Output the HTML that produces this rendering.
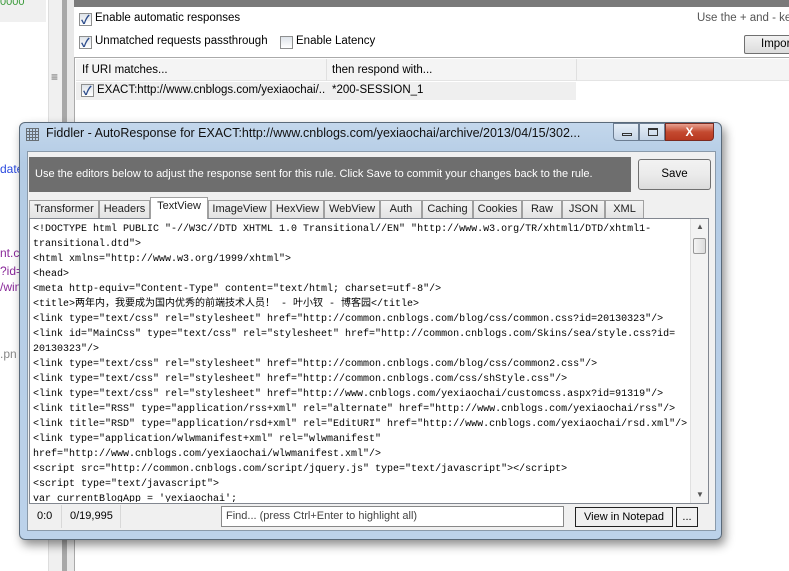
<!DOCTYPE html>
<html><head><meta charset="utf-8"><style>
*{margin:0;padding:0;box-sizing:border-box}
body{width:789px;height:571px;background:#fff;position:relative;overflow:hidden;font-family:"Liberation Sans","Noto Sans CJK SC",sans-serif;font-size:11.5px;color:#000}
.a{position:absolute;white-space:nowrap}
.cb{position:absolute;width:13px;height:13px;border:1px solid #8e8f8f;background:linear-gradient(#dfe4ea,#fff)}
.cb.on::after{content:"✓";position:absolute;left:1px;top:-3px;font-size:12px;color:#2a4a8a;font-weight:bold}
.mono{font-family:"Liberation Mono","Noto Sans CJK SC",monospace;font-size:10px;white-space:pre;line-height:15px}
.tab{position:absolute;top:200px;height:18px;border:1px solid #a0a0a0;border-bottom:none;background:linear-gradient(#f4f4f4,#e3e3e3);font-size:11px;padding:2px 0;text-align:center;color:#222;white-space:nowrap;overflow:hidden}
</style></head><body>
<div class="a" style="left:0;top:0;width:46px;height:22px;background:#f0f0f0"></div>
<div class="a" style="left:0;top:-4px;color:#3a9a3a;font-size:11px">0000</div>
<div class="a" style="left:0;top:162px;color:#2a4adf;font-size:12px">date</div>
<div class="a" style="left:0;top:246px;color:#8a2a9a;font-size:12px">nt.c</div>
<div class="a" style="left:0;top:264px;color:#8a2a9a;font-size:12px">?id=</div>
<div class="a" style="left:0;top:280px;color:#8a2a9a;font-size:12px">/win</div>
<div class="a" style="left:0;top:347px;color:#888;font-size:12px">.pn</div>
<div class="a" style="left:48px;top:0;width:14px;height:571px;background:#f0f0f0;border-left:1px solid #ddd"></div>
<div class="a" style="left:51px;top:70px;color:#666;font-size:12px">≡</div>
<div class="a" style="left:62px;top:0;width:5px;height:571px;background:#a8a8a8"></div>
<div class="a" style="left:67px;top:0;width:7px;height:571px;background:#e8e8e8"></div>
<div class="a" style="left:74px;top:0;width:715px;height:7px;background:#7a7a7a"></div>
<div class="cb on" style="left:79px;top:13px"></div>
<div class="a" style="left:95px;top:12px">Enable automatic responses</div>
<div class="cb on" style="left:79px;top:36px"></div>
<div class="a" style="left:95px;top:35px">Unmatched requests passthrough</div>
<div class="cb" style="left:280px;top:36px"></div>
<div class="a" style="left:296px;top:35px">Enable Latency</div>
<div class="a" style="left:697px;top:12px;color:#555">Use the + and - ke</div>
<div class="a" style="left:744px;top:35px;width:60px;height:19px;border:1px solid #707070;border-radius:2px;background:linear-gradient(#f2f2f2,#dcdcdc);padding:2px 16px">Impor</div>
<div class="a" style="left:74px;top:57px;width:715px;height:1px;background:#aaa"></div>
<div class="a" style="left:74px;top:57px;width:1px;height:514px;background:#aaa"></div>
<div class="a" style="left:76px;top:59px;width:713px;height:22px;background:#f4f4f4;border-bottom:1px solid #e4e4e4"></div>
<div class="a" style="left:326px;top:59px;width:1px;height:22px;background:#e0e0e0"></div>
<div class="a" style="left:576px;top:59px;width:1px;height:22px;background:#e0e0e0"></div>
<div class="a" style="left:82px;top:64px">If URI matches...</div>
<div class="a" style="left:332px;top:64px">then respond with...</div>
<div class="a" style="left:76px;top:82px;width:500px;height:18px;background:#efefef"></div>
<div class="cb on" style="left:81px;top:84px"></div>
<div class="a" style="left:97px;top:84px;width:228px;overflow:hidden">EXACT:http://www.cnblogs.com/yexiaochai/...</div>
<div class="a" style="left:332px;top:84px">*200-SESSION_1</div>
<!-- dialog -->
<div class="a" style="left:19px;top:122px;width:703px;height:418px;border:1px solid #5a6a7a;border-radius:6px;background:linear-gradient(#c3d7ec,#b3cbe4 40px,#bcd2ea);box-shadow:3px 5px 10px rgba(0,0,0,.45)"></div>
<div class="a" style="left:26px;top:128px;width:13px;height:13px;background:repeating-linear-gradient(90deg,#444 0 1px,transparent 1px 3px),repeating-linear-gradient(#444 0 1px,transparent 1px 3px);opacity:.7"></div>
<div class="a" style="left:46px;top:126px;font-size:12.5px;color:#111">Fiddler - AutoResponse for EXACT:http://www.cnblogs.com/yexiaochai/archive/2013/04/15/302...</div>
<div class="a" style="left:613px;top:123px;width:26px;height:18px;border:1px solid #6c7d92;border-radius:0 0 0 4px;background:linear-gradient(#e6eef7,#c4d4e6)"><div class="a" style="left:8px;top:9px;width:10px;height:3px;border:1px solid #333"></div></div>
<div class="a" style="left:639px;top:123px;width:26px;height:18px;border:1px solid #6c7d92;background:linear-gradient(#e6eef7,#c4d4e6)"><div class="a" style="left:8px;top:4px;width:10px;height:8px;border:1px solid #333;border-top-width:2px"></div></div>
<div class="a" style="left:665px;top:123px;width:49px;height:18px;border:1px solid #7a2a20;border-radius:0 0 4px 0;background:linear-gradient(#e8a090,#c44a30 50%,#b83820);color:#fff;font-weight:bold;text-align:center;font-size:12px;line-height:16px">X</div>
<div class="a" style="left:27px;top:151px;width:689px;height:380px;background:#f0f0f0;border:1px solid #8a9aaa"></div>
<div class="a" style="left:29px;top:157px;width:602px;height:35px;background:#6e6e6e;color:#fff;padding:0 6px;line-height:35px;font-size:11px">Use the editors below to adjust the response sent for this rule. Click Save to commit your changes back to the rule.</div>
<div class="a" style="left:638px;top:159px;width:73px;height:31px;border:1px solid #707070;border-radius:3px;background:linear-gradient(#f2f2f2,#ebebeb 50%,#dcdcdc);text-align:center;line-height:29px">Save</div>
<div class="tab" style="left:29px;width:70px">Transformer</div>
<div class="tab" style="left:99px;width:51px">Headers</div>
<div class="tab" style="left:150px;width:58px;top:197px;height:22px;background:#fff;z-index:2">TextView</div>
<div class="tab" style="left:208px;width:63px">ImageView</div>
<div class="tab" style="left:271px;width:53px">HexView</div>
<div class="tab" style="left:324px;width:56px">WebView</div>
<div class="tab" style="left:380px;width:42px">Auth</div>
<div class="tab" style="left:422px;width:51px">Caching</div>
<div class="tab" style="left:473px;width:49px">Cookies</div>
<div class="tab" style="left:522px;width:40px">Raw</div>
<div class="tab" style="left:562px;width:43px">JSON</div>
<div class="tab" style="left:605px;width:39px">XML</div>
<div class="a" style="left:29px;top:218px;width:680px;height:286px;background:#fff;border:1px solid #828790"></div>
<div class="a" style="left:690px;top:219px;width:18px;height:284px;background:#f3f3f3;border-left:1px solid #e0e0e0"></div>
<div class="a" style="left:693px;top:238px;width:13px;height:16px;border:1px solid #999;border-radius:2px;background:linear-gradient(90deg,#f4f4f4,#dcdcdc)"></div>
<div class="a" style="left:696px;top:222px;font-size:8px;color:#555">▲</div>
<div class="a" style="left:696px;top:490px;font-size:8px;color:#555">▼</div>
<div class="a mono" style="left:33px;top:222px;width:656px;height:280px;overflow:hidden">&lt;!DOCTYPE html PUBLIC "-//W3C//DTD XHTML 1.0 Transitional//EN" "http://www.w3.org/TR/xhtml1/DTD/xhtml1-
transitional.dtd"&gt;
&lt;html xmlns="http://www.w3.org/1999/xhtml"&gt;
&lt;head&gt;
&lt;meta http-equiv="Content-Type" content="text/html; charset=utf-8"/&gt;
&lt;title&gt;两年内，我要成为国内优秀的前端技术人员！ - 叶小钗 - 博客园&lt;/title&gt;
&lt;link type="text/css" rel="stylesheet" href="http://common.cnblogs.com/blog/css/common.css?id=20130323"/&gt;
&lt;link id="MainCss" type="text/css" rel="stylesheet" href="http://common.cnblogs.com/Skins/sea/style.css?id=
20130323"/&gt;
&lt;link type="text/css" rel="stylesheet" href="http://common.cnblogs.com/blog/css/common2.css"/&gt;
&lt;link type="text/css" rel="stylesheet" href="http://common.cnblogs.com/css/shStyle.css"/&gt;
&lt;link type="text/css" rel="stylesheet" href="http://www.cnblogs.com/yexiaochai/customcss.aspx?id=91319"/&gt;
&lt;link title="RSS" type="application/rss+xml" rel="alternate" href="http://www.cnblogs.com/yexiaochai/rss"/&gt;
&lt;link title="RSD" type="application/rsd+xml" rel="EditURI" href="http://www.cnblogs.com/yexiaochai/rsd.xml"/&gt;
&lt;link type="application/wlwmanifest+xml" rel="wlwmanifest"
href="http://www.cnblogs.com/yexiaochai/wlwmanifest.xml"/&gt;
&lt;script src="http://common.cnblogs.com/script/jquery.js" type="text/javascript"&gt;&lt;/script&gt;
&lt;script type="text/javascript"&gt;
var currentBlogApp = 'yexiaochai';</div>
<div class="a" style="left:29px;top:505px;width:681px;height:23px;background:#f0f0f0"></div>
<div class="a" style="left:37px;top:510px;font-size:11px">0:0</div>
<div class="a" style="left:61px;top:505px;width:1px;height:23px;background:#d8d8d8"></div>
<div class="a" style="left:70px;top:510px;font-size:11px">0/19,995</div>
<div class="a" style="left:120px;top:505px;width:1px;height:23px;background:#d8d8d8"></div>
<div class="a" style="left:221px;top:506px;width:343px;height:21px;background:#fff;border:1px solid #888;padding:3px 4px;color:#444;font-size:11px">Find... (press Ctrl+Enter to highlight all)</div>
<div class="a" style="left:575px;top:507px;width:98px;height:20px;border:1px solid #222;background:#f0f0f0;text-align:center;line-height:18px;font-size:11px">View in Notepad</div>
<div class="a" style="left:676px;top:507px;width:22px;height:20px;border:1px solid #222;background:#f0f0f0;text-align:center;line-height:18px;font-size:11px">...</div>
</body></html>
